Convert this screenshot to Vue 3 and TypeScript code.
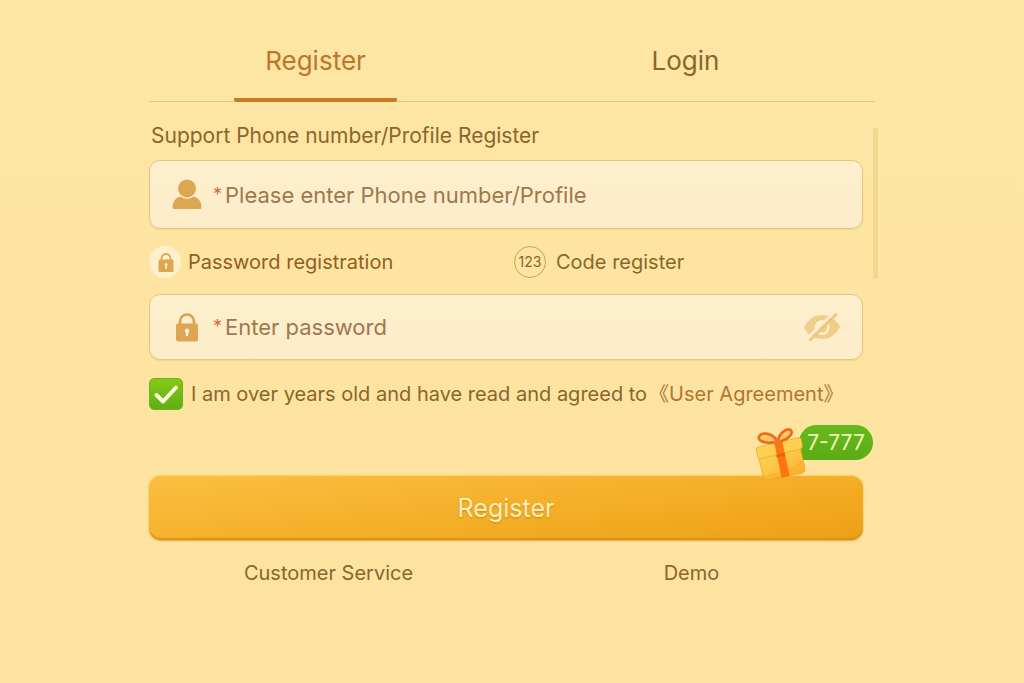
<script setup lang="ts">
import { ref } from 'vue'

type Tab = 'register' | 'login'
type Method = 'password' | 'code'

const tab = ref<Tab>('register')
const method = ref<Method>('password')
const account = ref('')
const password = ref('')
const agreed = ref(true)
const showPassword = ref(false)
</script>

<template>
  <main class="page">
    <nav class="tabs" aria-label="Account">
      <button type="button" class="tab" :class="{ active: tab === 'register' }" @click="tab = 'register'">Register</button>
      <button type="button" class="tab" :class="{ active: tab === 'login' }" @click="tab = 'login'">Login</button>
    </nav>

    <form class="form" @submit.prevent>
      <span class="scrollbar" aria-hidden="true"></span>

      <label class="hint" for="account">Support Phone number/Profile Register</label>
      <div class="field account-field">
        <svg class="field-icon" viewBox="0 0 30 32" aria-hidden="true">
          <circle cx="15" cy="9.500" r="9" />
          <path d="M.5 28.500C.5 22 4 18.700 8.500 17.500C12.500 20.500 17.500 20.500 21.500 17.500C26 18.700 29.500 22 29.500 28.500Q29.500 30 28 30H2Q.5 30 .5 28.500Z" />
        </svg>
        <span class="star" aria-hidden="true">*</span>
        <input id="account" v-model="account" type="text" placeholder="Please enter Phone number/Profile" />
      </div>

      <div class="methods">
        <label class="method selected">
          <input v-model="method" class="hidden-radio" type="radio" name="method" value="password" />
          <span class="disc">
            <svg viewBox="0 0 32 32" aria-hidden="true">
              <path d="M12.500 15V12.500a4.500 4.500 0 0 1 9 0V15" fill="none" stroke="#dfa552" stroke-width="1.800" />
              <rect x="9.500" y="13.500" width="15" height="12.500" rx="1.500" fill="#dfa552" />
              <path d="M17 17a1.500 1.500 0 0 1 .9 2.700V23h-1.600v-3.300a1.500 1.500 0 0 1 .7-2.700Z" fill="#fdf0cf" />
            </svg>
          </span>
          Password registration
        </label>
        <label class="method">
          <input v-model="method" class="hidden-radio" type="radio" name="method" value="code" />
          <span class="ring" aria-hidden="true">123</span>
          Code register
        </label>
      </div>

      <div class="field password-field">
        <svg class="field-icon" viewBox="0 0 30 32" aria-hidden="true">
          <path d="M8 14V10.500a7 7 0 0 1 14 0V14" fill="none" stroke="#d9a04e" stroke-width="2.600" />
          <rect x="4" y="12.500" width="22" height="18" rx="2" />
          <path d="M15 17.500a2.300 2.300 0 0 1 1.200 4.200V25h-2.400v-3.300a2.300 2.300 0 0 1 1.200-4.200Z" fill="#fdf3dc" />
        </svg>
        <span class="star" aria-hidden="true">*</span>
        <input id="password" v-model="password" :type="showPassword ? 'text' : 'password'" placeholder="Enter password" aria-label="Password" />
        <button type="button" class="eye" aria-label="Show password" @click="showPassword = !showPassword">
          <svg viewBox="0 0 36 30" aria-hidden="true">
            <path d="M0 15.500C4 7.500 10.500 3 18 3S32 7.500 36 15C32 22.500 26 27 18 27S4 23 0 15.500Z" fill="#f0cd8a" />
            <circle cx="18" cy="15.500" r="7.500" fill="#fdefcf" />
            <path d="M18 10.500a5 5 0 1 1-4 8Z" fill="#f0cd8a" />
            <path d="M3 26.500L29.500 1" stroke="#fdefcf" stroke-width="2.600" />
            <path d="M6 28L32 2.500" stroke="#edc67e" stroke-width="2.600" stroke-linecap="round" />
          </svg>
        </button>
      </div>

      <div class="agreement">
        <span class="check">
          <input id="agree" v-model="agreed" type="checkbox" />
          <svg v-if="agreed" viewBox="0 0 34 32" aria-hidden="true">
            <path d="M7.500 17L14 23.500L27 9.500" />
          </svg>
        </span>
        <label for="agree">I am over years old and have read and agreed to</label>
        <a href="#agreement">《User Agreement》</a>
      </div>

      <div class="submit-wrap">
        <button type="submit" class="submit">Register</button>
        <div class="promo">
          <svg class="gift" viewBox="45 35 150 162" aria-hidden="true">
            <defs>
              <linearGradient id="gift-box" x1="0" y1="0" x2="1" y2="1">
                <stop offset="0" stop-color="#ffd75a" />
                <stop offset="1" stop-color="#f9b02a" />
              </linearGradient>
            </defs>
            <path d="M56 127L182 101L195 160Q196 170 188 173L82 194Q73 195 71 187Z" fill="url(#gift-box)" stroke="#eb9a20" stroke-width="2" />
            <path d="M70 181Q140 167 191 137L195 162Q196 171 188 173L82 194Q73 195 71 187Z" fill="#f7ad2a" opacity=".5" />
            <path d="M49 104Q48 97 55 95L175 67Q182 65 184 73L187 91Q188 99 181 101L60 131Q54 132 53 124Z" fill="#ffcf50" stroke="#eca126" stroke-width="2" />
            <path d="M103 84L127 79L149 182L125 187Z" fill="#fa7612" />
            <path d="M108 119L134 112L136 121L110 127Z" fill="#dd5708" opacity=".65" />
            <path d="M113 80C99 51 66 50 58 62C50 76 75 83 90 82C98 81 105 80 113 80Z" fill="#ffc66a" stroke="#ec6c1c" stroke-width="8" />
            <path d="M113 80C117 53 139 38 151 43C163 53 145 70 130 75C124 77 119 79 113 80Z" fill="#ffc66a" stroke="#ec6c1c" stroke-width="8" />
            <rect x="102" y="72" width="21" height="17" rx="7" fill="#f27a20" />
          </svg>
          <span class="badge">7-777</span>
        </div>
      </div>
    </form>

    <footer class="links">
      <a href="#service">Customer Service</a>
      <a href="#demo">Demo</a>
    </footer>
  </main>
</template>

<style>
body {
  margin: 0;
  background: #fde4a0;
}
</style>

<style scoped>
.page {
  box-sizing: border-box;
  min-height: 100vh;
  padding: 20px 149px 40px;
  background: linear-gradient(180deg, #fde5a4 0%, #fde4a0 50%, #fde39f 80%, #fce3a2 100%);
  color: #8b652d;
  font: 400 20px/28px Inter, "Liberation Sans", "Noto Sans CJK SC", sans-serif;
}

button,
input {
  margin: 0;
  padding: 0;
  border: 0;
  background: none;
  color: inherit;
  font: inherit;
}

button {
  cursor: pointer;
}

a {
  color: inherit;
  text-decoration: none;
}

.tabs {
  display: flex;
  justify-content: space-between;
  padding: 0 108px 0 85px;
  border-bottom: 1px solid #e2c682;
}

.tab {
  width: 163px;
  height: 82px;
  margin-bottom: -1px;
  padding-top: 4px;
  border-bottom: 4px solid transparent;
  border-radius: 2px;
  font-size: 26px;
}

.tab.active {
  border-bottom-color: #c47b22;
  color: #bd7629;
}

.form {
  position: relative;
  padding: 20px 12px 0 0;
}

.scrollbar {
  position: absolute;
  top: 26px;
  right: -3px;
  width: 5px;
  height: 151px;
  border-radius: 2px;
  background: #f0d88e;
}

.hint {
  display: block;
  padding: 0 2px;
  font-size: 21px;
}

.field {
  box-sizing: border-box;
  display: flex;
  align-items: center;
  padding: 0 22px;
  border: 1px solid #e7c581;
  border-radius: 11px;
  background: linear-gradient(180deg, #feefcd, #fcecca);
  box-shadow: 0 1px 1px #e8c98480;
  color: #99714a;
  font-size: 22px;
}

.account-field {
  height: 69px;
  margin-top: 10px;
}

.password-field {
  height: 66px;
}

.field-icon {
  flex: none;
  width: 30px;
  height: 32px;
  fill: #dca652;
}

.star {
  width: 12px;
  margin-left: 11px;
  color: #dc6740;
  font-size: 18px;
}

.field input {
  flex: 1;
  min-width: 0;
  height: 40px;
  outline: none;
}

.field input::placeholder {
  color: #9f784c;
  opacity: 1;
}

.eye {
  width: 36px;
  height: 30px;
}

.eye svg {
  display: block;
}

.methods {
  display: grid;
  grid-template-columns: 1fr 1fr;
  gap: 4px;
  margin: 17px -12px 16px 0;
}

.method {
  position: relative;
  display: flex;
  align-items: center;
  gap: 10px;
}

.selected {
  gap: 7px;
  color: #935d24;
}

.hidden-radio {
  position: absolute;
  width: 32px;
  height: 32px;
  opacity: 0;
}

.disc,
.ring {
  box-sizing: border-box;
  flex: none;
  width: 32px;
  height: 32px;
  border-radius: 50%;
}

.disc {
  background: #fdf0cc;
}

.ring {
  border: 1px solid #c6a458;
  font-size: 14px;
  line-height: 30px;
  text-align: center;
}

.agreement {
  display: flex;
  align-items: center;
  margin-top: 18px;
  white-space: nowrap;
}

.agreement a {
  margin-left: 2px;
  color: #b37433;
}

.check {
  position: relative;
  flex: none;
  width: 34px;
  height: 32px;
  margin-right: 8px;
}

.check input {
  display: block;
  width: 34px;
  height: 32px;
  border: 1px solid #6fb11c;
  border-radius: 5px;
  appearance: none;
}

.check input:checked {
  background: linear-gradient(180deg, #84c817, #60ae16);
}

.check svg {
  position: absolute;
  inset: 0;
  fill: none;
  stroke: #fbfbd5;
  stroke-width: 4;
  stroke-linecap: round;
  stroke-linejoin: round;
  pointer-events: none;
}

.submit-wrap {
  position: relative;
  margin-top: 65px;
}

.submit {
  width: 100%;
  height: 65px;
  border-radius: 12px;
  background: linear-gradient(173deg, #fcbf40 0%, #f5b02a 50%, #eda015 100%);
  box-shadow: inset 0 1px 1px #ffd66c, inset 0 -2px 1px #dc9217, 0 1px 2px #d8a64a;
  color: #fff0b8;
  font-size: 25px;
  text-shadow: 0 1px 2px #ca8615;
}

.promo {
  position: absolute;
  top: -50px;
  right: -10px;
  display: flex;
  align-items: flex-start;
}

.gift {
  z-index: 1;
  width: 50px;
  height: 54px;
  margin: 2px -6px 0 0;
}

.badge {
  width: 74px;
  border-radius: 18px 18px 18px 4px;
  background: linear-gradient(180deg, #66b91b, #5bac16);
  color: #f4f7b5;
  font-size: 21px;
  line-height: 35px;
  text-align: center;
}

.links {
  display: grid;
  grid-template-columns: 1fr 1fr;
  margin: 19px 2px 0 -2px;
  text-align: center;
}
</style>
